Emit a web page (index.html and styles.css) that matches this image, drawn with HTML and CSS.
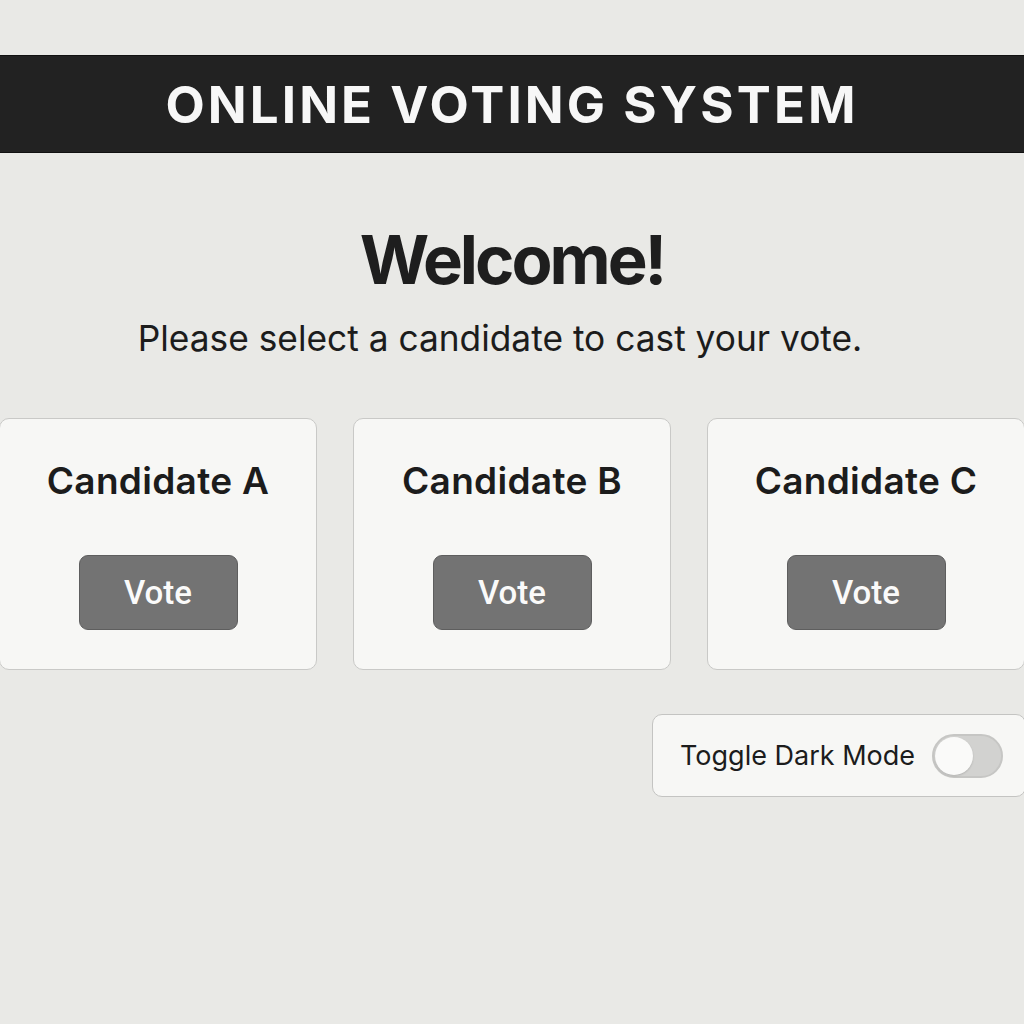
FILE: index.html
```html
<!DOCTYPE html>
<html lang="en">
<head>
<meta charset="utf-8">
<title>Online Voting System</title>
<link rel="stylesheet" href="styles.css">
</head>
<body>
<header class="topbar"><h1 class="title">ONLINE VOTING SYSTEM</h1></header>
<main class="main">
  <h2 class="welcome">Welcome!</h2>
  <p class="lead">Please select a candidate to cast your vote.</p>
  <section class="cards">
    <div class="card"><h3 class="name">Candidate A</h3><button class="vote">Vote</button></div>
    <div class="card"><h3 class="name">Candidate B</h3><button class="vote">Vote</button></div>
    <div class="card"><h3 class="name">Candidate C</h3><button class="vote">Vote</button></div>
  </section>
  <div class="toggle-row">
    <div class="toggle-box">
      <span class="toggle-label">Toggle Dark Mode</span>
      <span class="switch"><span class="knob"></span></span>
    </div>
  </div>
</main>
</body>
</html>
```
FILE: styles.css
```css
html, body {
  margin: 0;
  padding: 0;
}
body {
  background: #e9e9e6;
  font-family: Inter, "Noto Sans", sans-serif;
  color: #1c1c1c;
  width: 1024px;
  height: 1024px;
  overflow: hidden;
}
.topbar {
  margin-top: 55px;
  height: 98px;
  background: #222222;
  display: flex;
  align-items: center;
  justify-content: center;
  border-top: 1px solid #111;
  border-bottom: 1px solid #111;
  box-sizing: border-box;
}
.title {
  margin: 0;
  color: #f7f7f7;
  font-size: 51px;
  font-weight: 700;
  letter-spacing: 3.1px;
  line-height: 1;
}
.main {
  display: flex;
  flex-direction: column;
  align-items: center;
}
.welcome {
  margin: 73px 0 0;
  font-size: 67px;
  font-weight: 700;
  letter-spacing: -3px;
  line-height: 1;
  color: #1e1e1e;
}
.lead {
  margin: 28px 24px 0 0;
  font-size: 35.3px;
  font-weight: 400;
  line-height: 1;
  color: #1c1c1c;
}
.cards {
  margin-top: 62px;
  display: flex;
  gap: 36px;
  justify-content: center;
  width: 1026px;
  flex-shrink: 0;
}
.card {
  width: 318px;
  height: 252px;
  box-sizing: border-box;
  background: #f7f7f5;
  border: 1px solid #c9c9c7;
  border-radius: 10px;
  display: flex;
  flex-direction: column;
  align-items: center;
  flex-shrink: 0;
}
.name {
  margin: 43px 0 0;
  font-size: 37px;
  font-weight: 600;
  letter-spacing: 0.3px;
  line-height: 1;
  color: #1c1c1c;
}
.vote {
  margin-top: 56px;
  width: 159px;
  height: 75px;
  background: #737373;
  border: 1px solid #5e5e5e;
  border-radius: 9px;
  color: #fafafa;
  font-family: Roboto, "Noto Sans", sans-serif;
  font-size: 33px;
  font-weight: 500;
  padding: 0;
}
.toggle-row {
  width: 1024px;
  display: flex;
  justify-content: flex-end;
  margin-top: 44px;
}
.toggle-box {
  margin-right: -2px;
  width: 374px;
  height: 83px;
  box-sizing: border-box;
  background: #f7f7f5;
  border: 1px solid #c4c4c2;
  border-radius: 10px;
  display: flex;
  align-items: center;
  padding-left: 27px;
  gap: 17px;
}
.toggle-label {
  font-size: 27px;
  color: #1c1c1c;
}
.switch {
  width: 71px;
  height: 44px;
  border-radius: 22px;
  background: #d2d2d0;
  box-sizing: border-box;
  border: 2px solid #c6c6c4;
  display: flex;
  align-items: center;
  padding-left: 1px;
}
.knob {
  width: 38px;
  height: 38px;
  border-radius: 50%;
  background: #fafaf9;
  box-shadow: 0 1px 2px rgba(0,0,0,0.15);
}
```
